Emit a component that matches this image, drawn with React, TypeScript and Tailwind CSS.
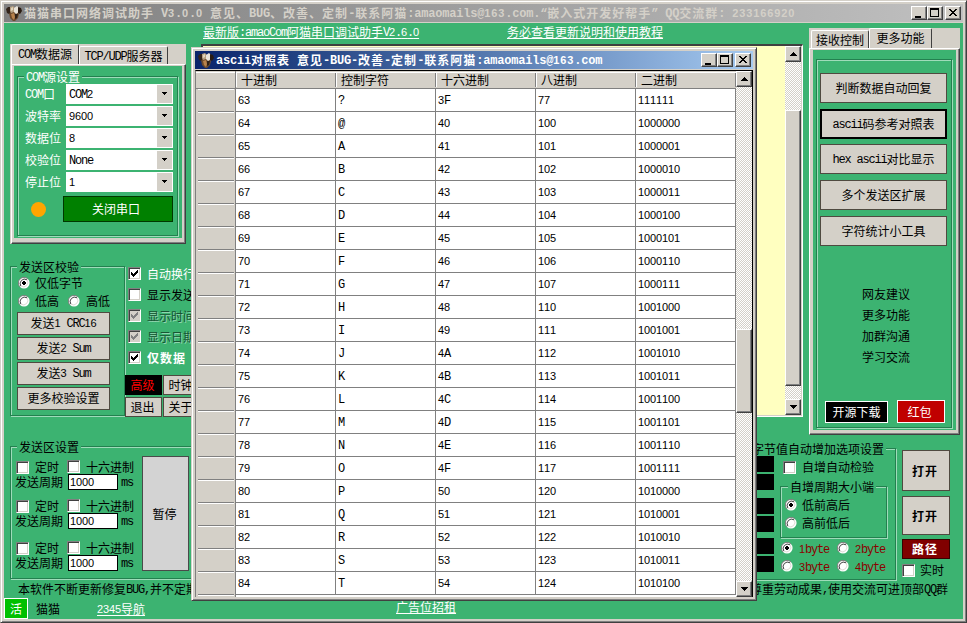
import React from "react";
import { clsx } from "clsx";

const CJK = "[\\u3000-\\u9fff\\uff00-\\uffef]+";
const PARTS = new RegExp(`${CJK}|[0-9]+|[^0-9\\u3000-\\u9fff\\uff00-\\uffef]+`, "g");

/* Fixed pitch text: 12px ideographs with 6px wide latin characters (13/7 when bold). */
function T({ children, bold, className }: { children: string; bold?: boolean; className?: string }) {
  return (
    <span
      className={clsx(
        "block shrink-0 whitespace-pre font-['Noto_Sans_CJK_SC',sans-serif] text-[12px] leading-[14px] [font-kerning:none]",
        bold && "font-bold tracking-[1px]",
        className,
      )}
    >
      {(children.match(PARTS) ?? []).map((p, i) => {
        if (/[\u3000-\u9fff\uff00-\uffef]/.test(p)) return <span key={i}>{p}</span>;
        if (/[0-9]/.test(p))
          return (
            <span
              key={i}
              className={clsx(
                "align-[1px] font-['Liberation_Sans',sans-serif] text-[11px] leading-[0]",
                bold ? "tracking-[0.88px]" : "tracking-[-0.12px]",
              )}
            >
              {p}
            </span>
          );
        return (
          <span
            key={i}
            className={clsx(
              "align-[1px] font-['Liberation_Mono',monospace] leading-[0]",
              bold ? "text-[12px] tracking-[-0.2px]" : "text-[12px] tracking-[-1.2px]",
            )}
          >
            {p}
          </span>
        );
      })}
    </span>
  );
}

const raised =
  "border border-t-white border-l-white border-r-[#404040] border-b-[#404040] bg-[#d4d0c8] shadow-[inset_-1px_-1px_0_#808080]";
const frame =
  "border border-t-[#d4d0c8] border-l-[#d4d0c8] border-r-[#404040] border-b-[#404040] bg-[#d4d0c8] p-[3px] shadow-[inset_1px_1px_0_#fff,inset_-1px_-1px_0_#808080]";
const etched = "border border-[#23804f] shadow-[1px_1px_0_#9fdcba,inset_1px_1px_0_#9fdcba]";

function Group({ title, className, titleClass, children }: { title: string; className: string; titleClass?: string; children: React.ReactNode }) {
  return (
    <section className={clsx(etched, className)}>
      <h3 className={clsx("-mt-[7px] w-fit bg-[#3cb371] px-[2px]", titleClass)}>
        <T>{title}</T>
      </h3>
      {children}
    </section>
  );
}

function Btn({ label, className, bold }: { label: string; className?: string; bold?: boolean }) {
  return (
    <button className={clsx("flex shrink-0 items-center justify-center overflow-hidden border", className)}>
      <T bold={bold}>{label}</T>
    </button>
  );
}
const flat = "border-[#4f4a40] bg-[#d4d0c8] text-black";

function Check({ on, disabled }: { on?: boolean; disabled?: boolean }) {
  return (
    <span
      className={clsx(
        "block size-[13px] shrink-0 border border-t-[#808080] border-l-[#808080] border-r-white border-b-white shadow-[inset_1px_1px_0_#404040,inset_-1px_-1px_0_#d4d0c8]",
        disabled ? "bg-[#d4d0c8]" : "bg-white",
      )}
    >
      {on && (
        <svg width="11" height="11" viewBox="0 0 11 11" shapeRendering="crispEdges">
          <path d="M2 4h1v1h1v1h1v-1h1v-1h1v-1h1v-1h1v3h-1v1h-1v1h-1v1h-1v1h-1v-1h-1v-1h-1z" fill={disabled ? "#808080" : "#000"} />
        </svg>
      )}
    </span>
  );
}

function Radio({ on }: { on?: boolean }) {
  return (
    <svg className="block size-3 shrink-0" viewBox="0 0 12 12">
      <circle cx="6" cy="6" r="5.6" fill="#fff" />
      <path d="M2 10A5.5 5.5 0 0 1 10 2" fill="none" stroke="#808080" />
      <path d="M2.8 9A4.5 4.5 0 0 1 9 2.8" fill="none" stroke="#404040" />
      <path d="M3 9.2A4.5 4.5 0 0 0 9.2 3" fill="none" stroke="#d4d0c8" strokeWidth=".8" />
      {on && <path d="M5 4h2v1h1v2h-1v1h-2v-1h-1v-2h1z" fill="#000" shapeRendering="crispEdges" />}
    </svg>
  );
}

function Arrow({ up, small }: { up?: boolean; small?: boolean }) {
  return (
    <svg width="7" height="4" viewBox="0 0 7 4" shapeRendering="crispEdges">
      {small ? (
        <path d="M1 0h5v1h-1v1h-1v1h-1v-1h-1v-1h-1z" />
      ) : up ? (
        <path d="M3 0h1v1h1v1h1v1h1v1h-7v-1h1v-1h1v-1h1z" />
      ) : (
        <path d="M0 0h7v1h-1v1h-1v1h-1v1h-1v-1h-1v-1h-1v-1h-1z" />
      )}
    </svg>
  );
}

function Scroll({ before, thumb }: { before: number; thumb: number }) {
  return (
    <div className="flex w-4 shrink-0 flex-col bg-[repeating-conic-gradient(#fff_0_25%,#d4d0c8_0_50%)] bg-[length:2px_2px]">
      <div className={clsx(raised, "flex h-4 shrink-0 items-center justify-center")}><Arrow up /></div>
      <div className="shrink-0" style={{ height: before }} />
      <div className={clsx(raised, "shrink-0")} style={{ height: thumb }} />
      <div className="flex-1" />
      <div className={clsx(raised, "flex h-4 shrink-0 items-center justify-center")}><Arrow /></div>
    </div>
  );
}

function CatIcon() {
  return (
    <svg className="block shrink-0" width="16" height="16" viewBox="0 0 16 16">
      <path d="M3 8l2-3 6 1 2 3-1 4-3 3H7l-3-3z" fill="#6b4a2c" />
      <path d="M0 4l2-2 3 0 0 4-2 3-2-1z" fill="#33241a" />
      <path d="M4 2l3-1 2 2-1 4-3 1-1-2z" fill="#b7a080" />
      <path d="M5 3l2-1 0 3-2 1z" fill="#e0d4bd" />
      <path d="M8 3l3-2 2 2 0 4-3 2-2-2z" fill="#e9e4da" />
      <path d="M12 2l3 1 1 3-2 3-2-1z" fill="#2a1c12" />
      <path d="M5 9l3-1 1 4-1 3-2-2z" fill="#b8824c" />
      <path d="M9 9l3 0-1 4-2 1z" fill="#2e2017" />
    </svg>
  );
}

function Caption() {
  const b = clsx(raised, "h-[14px] w-4 shrink-0");
  return (
    <div className="flex shrink-0">
      <div className={b}><svg width="14" height="12" shapeRendering="crispEdges"><path d="M3 9h6v2H3z" /></svg></div>
      <div className={b}>
        <svg width="14" height="12" shapeRendering="crispEdges"><path fillRule="evenodd" d="M2 1h9v9H2zM3 3v6h7V3z" /></svg>
      </div>
      <div className={clsx(b, "ml-[2px]")}>
        <svg width="14" height="12" shapeRendering="crispEdges">
          <path d="M3 2h2v1h1v1h2v-1h1v-1h2v1h-1v1h-1v1h-1v1h1v1h1v1h1v1h-2v-1h-1v-1h-2v1h-1v1h-2v-1h1v-1h1v-1h1v-1h-1v-1h-1v-1h-1z" />
        </svg>
      </div>
    </div>
  );
}

const page =
  "border border-t-white border-l-white border-r-[#404040] border-b-[#404040] bg-[#d4d0c8] shadow-[inset_-1px_-1px_0_#808080]";
const tab = "flex items-center justify-center rounded-t-[2px] border-l border-t border-r border-l-white border-t-white border-r-[#404040] bg-[#d4d0c8]";

function ComPanel() {
  const rows = [["COM口", "COM2"], ["波特率", "9600"], ["数据位", "8"], ["校验位", "None"], ["停止位", "1"]];
  return (
    <div className="h-[200px] w-[176px] bg-[#d4d0c8] pl-px">
      <div className="flex h-5 items-end">
        <div className={clsx(tab, "h-5 w-[68px] pb-[2px]")}><T>COM数据源</T></div>
        <div className={clsx(tab, "h-[18px] w-[89px]")}><T>TCP/UDP服务器</T></div>
      </div>
      <div className={clsx(page, "h-[180px] pt-px pr-[3px] pb-[5px] pl-[2px]")}>
        <div className="h-full bg-[#3cb371] pt-[10px] pl-[3px] text-white">
          <Group title="COM源设置" className="h-[160px] w-[161px]" titleClass="ml-[6px]">
            <div className="flex flex-col gap-[2px] pl-[7px]">
              {rows.map(([l, v]) => (
                <div key={l} className="flex h-5 items-center">
                  <T className="w-[41px]">{l}</T>
                  <div className="flex h-5 w-[107px] items-center justify-between bg-white p-px pl-[3px] text-black">
                    <T>{v}</T>
                    <div className="flex h-[18px] w-[15px] items-center justify-center bg-[#d4d0c8]"><Arrow small /></div>
                  </div>
                </div>
              ))}
            </div>
            <div className="mt-1 flex items-center pl-[13px]">
              <span className="size-[15px] rounded-full bg-[#ffa500]" />
              <Btn label="关闭串口" className="ml-[17px] h-[26px] w-[110px] border-[#003800] bg-[#008000] pr-1 text-white" />
            </div>
          </Group>
        </div>
      </div>
    </div>
  );
}

function CheckPanel() {
  return (
    <div className="mt-[18px] flex h-[155px]">
      <Group title="发送区校验" className="mt-1 h-[150px] w-[115px]" titleClass="ml-[6px]">
        <div className="flex h-[18px] items-center pl-[7px]"><Radio on /><T className="ml-[5px]">仅低字节</T></div>
        <div className="flex h-[17px] items-center pl-[7px]">
          <Radio /><T className="ml-[5px]">低高</T><span className="ml-[9px]"><Radio /></span><T className="ml-[6px]">高低</T>
        </div>
        <div className="mt-[3px] flex flex-col gap-[2px] pl-[6px]">
          {["发送1 CRC16", "发送2 Sum", "发送3 Sum", "更多校验设置"].map((l) => (
            <Btn key={l} label={l} className={clsx(flat, "h-[23px] w-[93px] pb-px")} />
          ))}
        </div>
      </Group>
      <div className="w-[76px]">
        <div className="flex flex-col pt-px pl-[3px]">
          <div className="flex h-[21px] items-center text-white"><Check on /><T className="ml-[6px]">自动换行</T></div>
          <div className="flex h-[21px] items-center"><Check /><T className="ml-[6px]">显示发送</T></div>
          {["显示时间", "显示日期"].map((l) => (
            <div key={l} className="flex h-[21px] items-center text-[#175533] [text-shadow:1px_1px_0_#8fd5ae]">
              <Check on disabled /><T className="ml-[6px]">{l}</T>
            </div>
          ))}
          <div className="flex h-[21px] items-center text-white"><Check on /><T bold className="ml-[6px]">仅数据</T></div>
        </div>
        <div className="mt-[7px] grid grid-cols-[37px_37px] gap-x-px gap-y-[2px]">
          <Btn label="高级" className="h-5 border-black bg-black pr-[2px] text-[#ff0000]" />
          <Btn label="时钟" className={clsx(flat, "h-5 pr-[2px]")} />
          <Btn label="退出" className={clsx(flat, "h-5 pr-[2px]")} />
          <Btn label="关于" className={clsx(flat, "h-5 pr-[2px]")} />
        </div>
      </div>
    </div>
  );
}

function MorePanel() {
  return (
    <div className="ml-[5px] mt-[5px] h-[407px] w-[151px] bg-[#d4d0c8]">
      <div className="flex h-5 items-end pl-[2px]">
        <div className={clsx(tab, "h-[18px] w-[58px]")}><T>接收控制</T></div>
        <div className={clsx(tab, "h-5 w-[63px] pb-[2px]")}><T>更多功能</T></div>
      </div>
      <div className={clsx(page, "h-[387px] pt-px pr-[3px] pb-[4px] pl-[3px]")}>
        <div className="h-full bg-[#3cb371] pt-[9px] pl-[3px]">
          <div className={clsx(etched, "h-[369px] w-[136px] pt-[13px] pl-[3px]")}>
            <Btn label="判断数据自动回复" className={clsx(flat, "h-[30px] w-[127px]")} />
            <Btn label="ascii码参考对照表" className="mt-[6px] h-[30px] w-[127px] border-2 border-black bg-[#d4d0c8]" />
            <Btn label="hex ascii对比显示" className={clsx(flat, "mt-[5px] h-[30px] w-[127px]")} />
            <Btn label="多个发送区扩展" className={clsx(flat, "mt-[6px] h-[30px] w-[127px]")} />
            <Btn label="字符统计小工具" className={clsx(flat, "mt-[6px] h-[30px] w-[127px]")} />
            <div className="mt-[38px] pl-[42px]">
              {["网友建议", "更多功能", "加群沟通", "学习交流"].map((l) => (
                <div key={l} className="flex h-[21px] items-center pb-px"><T>{l}</T></div>
              ))}
            </div>
            <div className="mt-8 flex items-end pl-[5px]">
              <Btn label="开源下载" className="h-[22px] w-[63px] border-white bg-black text-white" />
              <Btn label="红包" className="ml-[9px] h-[23px] w-12 border-white bg-[#c00000] pr-[3px] text-white" />
            </div>
          </div>
        </div>
      </div>
    </div>
  );
}

function SendBlock({ className }: { className: string }) {
  return (
    <div className={className}>
      <div className="flex h-[14px] items-center pl-[5px]">
        <Check /><T className="ml-[6px]">定时</T>
        <span className="ml-[8px] -mt-[2px]"><Check /></span><T className="ml-[6px]">十六进制</T>
      </div>
      <div className="flex h-4 items-center pl-1">
        <T>发送周期</T>
        <div className="ml-[5px] flex h-4 w-[50px] items-center border border-black bg-white pl-px"><T>1000</T></div>
        <T className="ml-[3px]">ms</T>
      </div>
    </div>
  );
}

function LowerPanels() {
  const bar = "h-4 bg-black";
  return (
    <div className="flex h-[141px] justify-between pl-[6px] pr-[13px]">
      <Group title="发送区设置" className="mt-[6px] h-[133px] w-[300px]" titleClass="ml-[6px]">
        <div className="flex">
          <div className="w-[131px]">
            <SendBlock className="mt-[6px]" />
            <SendBlock className="mt-[9px]" />
            <SendBlock className="mt-[12px]" />
          </div>
          <Btn label="暂停" className="mt-[2px] h-[115px] w-[47px] border-[#4a4a4a] bg-[#d3d3d3] pr-[2px]" />
        </div>
      </Group>
      <div className="flex gap-[6px]">
        <Group title="字节值自动增加选项设置" className="mt-2 h-[132px] w-[156px]" titleClass="ml-[9px]">
          <div className="flex">
            <div className="w-[33px]">
              <div className={bar} /><div className={clsx(bar, "mt-[2px]")} />
              <div className={clsx(bar, "mt-2")} /><div className={clsx(bar, "mt-[2px]")} />
              <div className={clsx(bar, "mt-[6px]")} /><div className={clsx(bar, "mt-[2px]")} />
            </div>
            <div className="ml-[6px] w-[107px]">
              <div className="mt-1 flex h-[14px] items-center pl-[3px]"><Check /><T className="ml-[6px]">自增自动检验</T></div>
              <Group title="自增周期大小端" className="mt-3 h-[52px]" titleClass="ml-[7px]">
                <div className="pt-[2px] pl-1">
                  <div className="flex h-[18px] items-center"><Radio on /><T className="ml-[5px]">低前高后</T></div>
                  <div className="flex h-[18px] items-center"><Radio /><T className="ml-[5px]">高前低后</T></div>
                </div>
              </Group>
              <div className="mt-px grid grid-cols-[56px_50px] pl-px text-[#8b0000]">
                {["1byte", "2byte", "3byte", "4byte"].map((l, i) => (
                  <div key={l} className="flex h-[18px] items-center"><Radio on={i === 0} /><T className="ml-[6px] pt-px">{l}</T></div>
                ))}
              </div>
            </div>
          </div>
        </Group>
        <div className="w-12 pt-[10px]">
          <Btn bold label="打开" className={clsx(flat, "h-[41px] w-12 pr-[2px]")} />
          <Btn bold label="打开" className={clsx(flat, "mt-[5px] h-[39px] w-12 pr-[2px]")} />
          <Btn bold label="路径" className="mt-1 h-5 w-12 border-[#380000] bg-[#800000] pr-[2px] text-white" />
          <div className="mt-1 flex h-[14px] items-center"><Check /><T className="ml-[5px]">实时</T></div>
        </div>
      </div>
    </div>
  );
}

const controls = "?@ABCDEFGHIJKLMNOPQRST";
const heads = ["十进制", "控制字符", "十六进制", "八进制", "二进制"];

function cells(i: number) {
  const n = 63 + i;
  return [String(n), controls[i], n.toString(16).toUpperCase(), n.toString(8), n.toString(2)];
}

function AsciiWindow() {
  return (
    <div className={clsx(frame, "absolute left-[190px] top-[46px] h-[554px] w-[566px]")}>
      <div className="flex h-[18px] items-center bg-gradient-to-r from-[#0a246a] to-[#a6caf0] pr-[2px] pl-[3px]">
        <CatIcon />
        <T bold className="ml-[2px] text-white">ascii对照表 意见-BUG-改善-定制-联系阿猫:amaomails@163.com</T>
        <div className="ml-auto"><Caption /></div>
      </div>
      <div className="mt-px flex h-[527px] overflow-hidden border-t border-r border-l border-t-black border-r-black border-l-[#808080]">
        <div className="w-[540px] bg-white">
          <div className="grid h-[18px] grid-cols-[40px_repeat(5,100px)] border-b border-[#808080] bg-[#d4d0c8] shadow-[inset_0_1px_0_#d4d0c8,inset_0_2px_0_#fff]">
            <div className="border-r border-[#808080]" />
            {heads.map((h) => (
              <div key={h} className="my-[2px] flex items-center border-r border-[#808080] pl-[5px] shadow-[inset_1px_0_0_#fff]"><T>{h}</T></div>
            ))}
          </div>
          {Array.from({ length: 23 }, (_, i) => (
            <div key={i} className="grid h-[23px] grid-cols-[40px_repeat(5,100px)]">
              <div className="border-r border-[#808080] bg-[#d4d0c8] pr-px pl-[2px]">
                <div className="h-[23px] border-t border-b border-t-white border-b-[#808080]" />
              </div>
              {i < 22 && cells(i).map((c, j) => (
                <div key={j} className="flex items-center border-r border-b border-[#808080] pl-[2px]"><T>{c}</T></div>
              ))}
            </div>
          ))}
        </div>
        <Scroll before={242} thumb={84} />
      </div>
    </div>
  );
}

export default function App() {
  return (
    <div className={clsx(frame, "relative h-[623px] w-[967px] overflow-hidden text-black")}>
      <div className="flex h-[18px] items-center bg-gradient-to-r from-[#808080] to-[#c0c0c0] pr-[2px] pl-[2px]">
        <CatIcon />
        <T bold className="ml-[2px] text-[#d4d0c8]">猫猫串口网络调试助手 V3.0.0 意见、BUG、改善、定制-联系阿猫:amaomails@163.com.“嵌入式开发好帮手” QQ交流群: 233166920</T>
        <div className="ml-auto"><Caption /></div>
      </div>
      <div className="mt-px h-[596px] bg-[#3cb371]">
        <div className="flex h-[417px]">
          <div className="w-[197px] shrink-0 pt-[21px] pl-[6px]">
            <ComPanel />
            <CheckPanel />
          </div>
          <div className="w-[603px] shrink-0">
            <div className="flex h-[21px] items-start pt-[2px] pl-[2px] text-white underline">
              <T className="w-[216px]">最新版:amaoCom阿猫串口调试助手V2.6.0</T>
              <T className="ml-[88px]">务必查看更新说明和使用教程</T>
            </div>
            <div className="flex h-[373px] w-[602px] border-t-2 border-r border-b border-l-2 border-t-[#404040] border-l-[#404040] border-r-white border-b-white bg-[#d4d0c8] pr-px pb-px">
              <div className="flex-1 bg-[#ffffc0]" />
              <Scroll before={48} thumb={276} />
            </div>
          </div>
          <MorePanel />
        </div>
        <LowerPanels />
        <div className="flex h-[17px] items-center justify-between pr-[15px] pb-[2px] pl-[14px]">
          <T>本软件不断更新修复BUG,并不定期</T>
          <T>尊重劳动成果,使用交流可进顶部QQ群</T>
        </div>
        <div className="flex h-[21px] items-center">
          <Btn label="活" className="h-[21px] w-6 border-white bg-[#00c000] text-white" />
          <T className="ml-2">猫猫</T>
          <T className="ml-[37px] text-white underline">2345导航</T>
          <T className="-mt-[3px] ml-[251px] text-white underline">广告位招租</T>
        </div>
      </div>
      <AsciiWindow />
    </div>
  );
}
